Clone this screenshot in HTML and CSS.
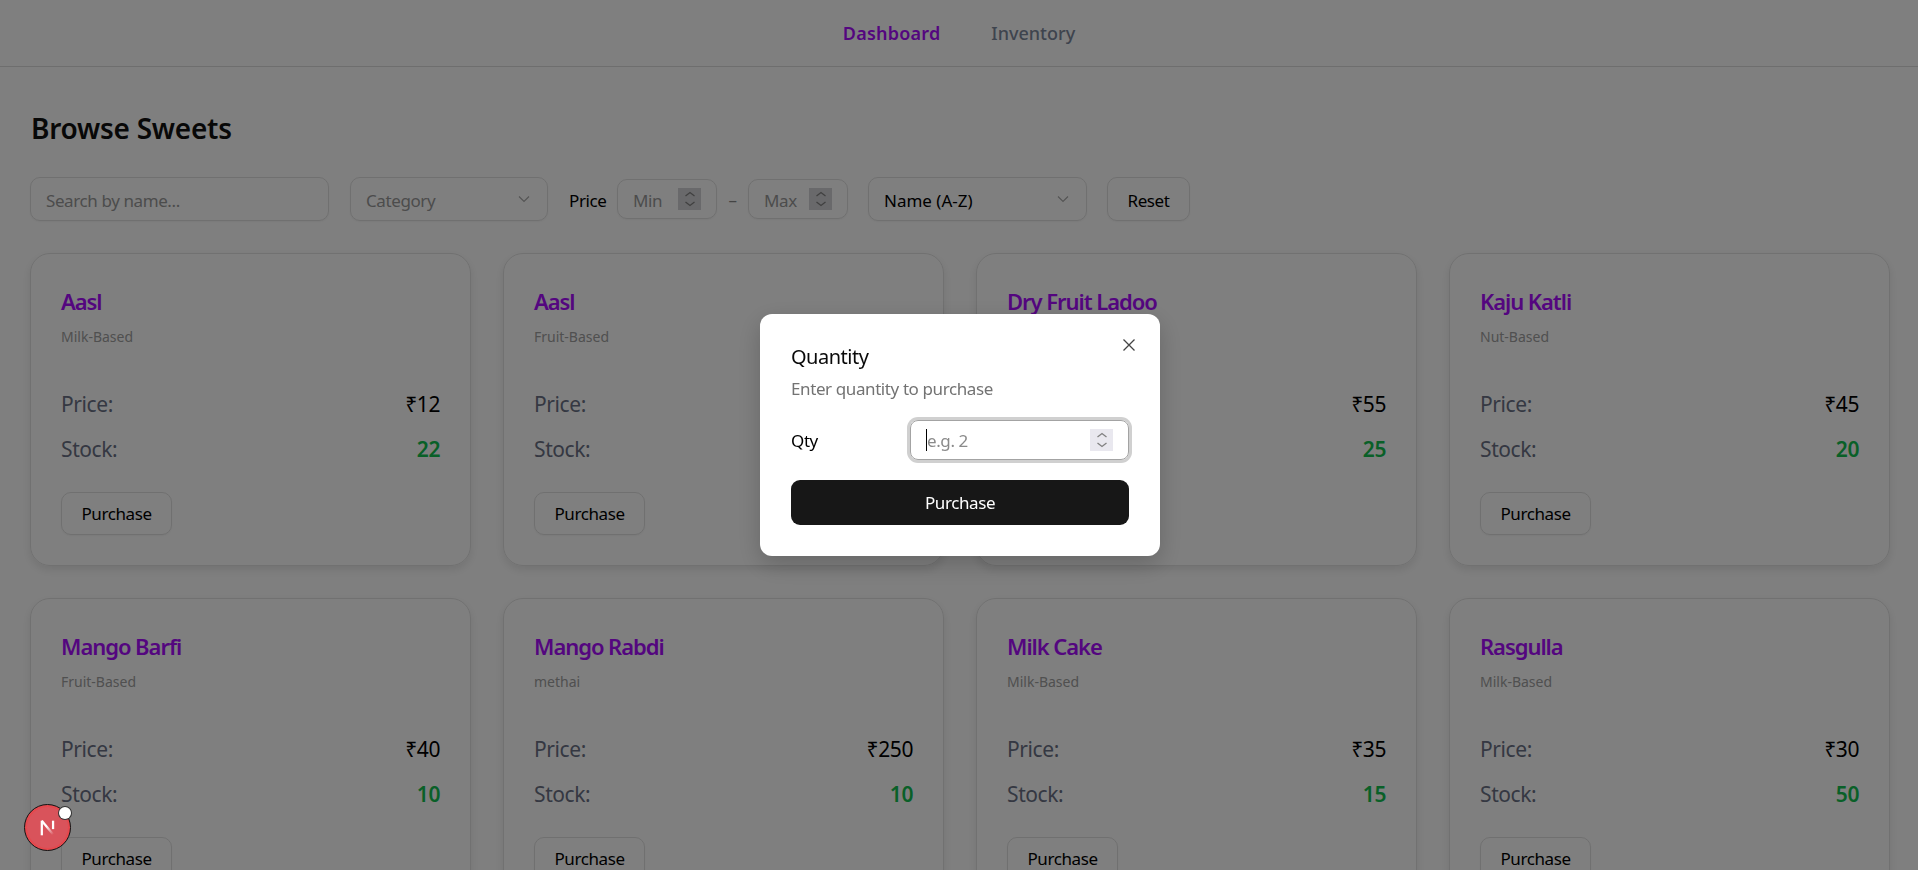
FILE: index.html
```html
<!DOCTYPE html>
<html lang="en">
<head>
    <meta charset="UTF-8">
    <meta name="viewport" content="width=device-width, initial-scale=1.0">
    <title>Browse Sweets</title>
    <link rel="stylesheet" href="styles.css">
</head>
<body>
    <nav class="topnav">
        <a class="nav-link active" href="#">Dashboard</a>
        <a class="nav-link" href="#">Inventory</a>
    </nav>

    <main class="page">
        <h1 class="page-title">Browse Sweets</h1>

        <div class="filters">
            <input class="field search" type="text" placeholder="Search by name...">
            <div class="field select muted">
                <span>Category</span>
                <svg class="chevron" viewBox="0 0 16 16"><path d="M3 5.5l5 5 5-5"/></svg>
            </div>
            <span class="price-label">Price</span>
            <div class="field small muted">
                <span>Min</span>
                <span class="spin"><svg viewBox="0 0 12 22"><path d="M1.5 8l4.500-3.500 4.500 3.500M1.500 14l4.500 3.500 4.500-3.500"/></svg></span>
            </div>
            <span class="dash">–</span>
            <div class="field small muted">
                <span>Max</span>
                <span class="spin"><svg viewBox="0 0 12 22"><path d="M1.5 8l4.500-3.500 4.500 3.500M1.500 14l4.500 3.500 4.500-3.500"/></svg></span>
            </div>
            <div class="field select sort">
                <span>Name (A-Z)</span>
                <svg class="chevron" viewBox="0 0 16 16"><path d="M3 5.5l5 5 5-5"/></svg>
            </div>
            <button class="btn reset">Reset</button>
        </div>

        <div class="grid">
            <div class="card">
                <h3 class="card-name">Aasl</h3>
                <p class="card-cat">Milk-Based</p>
                <div class="row"><span>Price:</span><span class="price">₹12</span></div>
                <div class="row"><span>Stock:</span><span class="stock">22</span></div>
                <button class="btn buy">Purchase</button>
            </div>
            <div class="card">
                <h3 class="card-name">Aasl</h3>
                <p class="card-cat">Fruit-Based</p>
                <div class="row"><span>Price:</span><span class="price">₹20</span></div>
                <div class="row"><span>Stock:</span><span class="stock">30</span></div>
                <button class="btn buy">Purchase</button>
            </div>
            <div class="card">
                <h3 class="card-name">Dry Fruit Ladoo</h3>
                <p class="card-cat">Nut-Based</p>
                <div class="row"><span>Price:</span><span class="price">₹55</span></div>
                <div class="row"><span>Stock:</span><span class="stock">25</span></div>
                <button class="btn buy">Purchase</button>
            </div>
            <div class="card">
                <h3 class="card-name">Kaju Katli</h3>
                <p class="card-cat">Nut-Based</p>
                <div class="row"><span>Price:</span><span class="price">₹45</span></div>
                <div class="row"><span>Stock:</span><span class="stock">20</span></div>
                <button class="btn buy">Purchase</button>
            </div>
            <div class="card">
                <h3 class="card-name">Mango Barfi</h3>
                <p class="card-cat">Fruit-Based</p>
                <div class="row"><span>Price:</span><span class="price">₹40</span></div>
                <div class="row"><span>Stock:</span><span class="stock">10</span></div>
                <button class="btn buy">Purchase</button>
            </div>
            <div class="card">
                <h3 class="card-name">Mango Rabdi</h3>
                <p class="card-cat">methai</p>
                <div class="row"><span>Price:</span><span class="price">₹250</span></div>
                <div class="row"><span>Stock:</span><span class="stock">10</span></div>
                <button class="btn buy">Purchase</button>
            </div>
            <div class="card">
                <h3 class="card-name">Milk Cake</h3>
                <p class="card-cat">Milk-Based</p>
                <div class="row"><span>Price:</span><span class="price">₹35</span></div>
                <div class="row"><span>Stock:</span><span class="stock">15</span></div>
                <button class="btn buy">Purchase</button>
            </div>
            <div class="card">
                <h3 class="card-name">Rasgulla</h3>
                <p class="card-cat">Milk-Based</p>
                <div class="row"><span>Price:</span><span class="price">₹30</span></div>
                <div class="row"><span>Stock:</span><span class="stock">50</span></div>
                <button class="btn buy">Purchase</button>
            </div>
        </div>
    </main>

    <!-- dim layer and purchase dialog -->
    <div class="overlay">
        <div class="modal">
            <svg class="modal-close" viewBox="0 0 16 16"><path d="M2.5 2.500l11 11M13.500 2.500l-11 11"/></svg>
            <h2 class="modal-title">Quantity</h2>
            <p class="modal-desc">Enter quantity to purchase</p>
            <div class="qty-row">
                <label class="qty-label">Qty</label>
                <div class="qty-input">
                    <span class="caret"></span>
                    <span class="qty-placeholder">e.g. 2</span>
                    <span class="spin light"><svg viewBox="0 0 12 22"><path d="M1.5 8l4.500-3.500 4.500 3.500M1.500 14l4.500 3.500 4.500-3.500"/></svg></span>
                </div>
            </div>
            <button class="modal-btn">Purchase</button>
        </div>
    </div>

    <!-- dev tools badge -->
    <div class="dev-badge">
        <svg class="dev-logo" viewBox="0 0 16 16">
            <defs>
                <linearGradient id="fade" x1="0" y1="0" x2="0.7" y2="1">
                    <stop offset="0.4" stop-color="#fff"/>
                    <stop offset="1" stop-color="#fff" stop-opacity="0"/>
                </linearGradient>
            </defs>
            <path class="n-left" d="M2.500 14.500V1.500"/>
            <path class="n-diag" d="M2.500 1.500L14 15.500"/>
            <path class="n-right" d="M12.500 1.500V9"/>
        </svg>
        <span class="dev-dot"></span>
    </div>
</body>
</html>
```

FILE: styles.css
```css
html, body {
    margin: 0;
    height: 100%;
    overflow: hidden;
}
body {
    font-family: "Noto Sans", "Open Sans", sans-serif;
    background-color: #fff;
    color: #000;
    letter-spacing: -0.4px;
}
.topnav {
    display: flex;
    justify-content: center;
    align-items: center;
    gap: 51px;
    height: 66px;
    border-bottom: 1px solid #ddd;
}
.nav-link {
    font-size: 18px;
    letter-spacing: 0;
    color: #7d889c;
    text-decoration: none;
    font-weight: 500;
}
.nav-link.active {
    color: #a80cff;
    font-weight: 600;
    letter-spacing: 0.2px;
}
.page {
    padding: 40px 28px 0 30px;
}
.page-title {
    margin: 0;
    padding-left: 1px;
    font-size: 28px;
    line-height: 42px;
    font-weight: 600;
    color: #111;
    letter-spacing: -0.25px;
}
.filters {
    display: flex;
    align-items: center;
    margin-top: 28px;
    height: 44px;
    font-size: 17px;
}
.field {
    box-sizing: border-box;
    height: 44px;
    border: 1px solid #e0e0e0;
    border-radius: 10px;
    background: transparent;
    font: inherit;
    letter-spacing: inherit;
    display: flex;
    align-items: center;
    padding: 0 15px;
    box-shadow: 0 1px 2px rgba(0, 0, 0, 0.05);
}
.field > span:first-child {
    padding-top: 3px;
}
.search {
    width: 299px;
    margin-right: 21px;
    padding-top: 3px;
    outline: none;
}
.search::placeholder {
    color: #999;
}
.select {
    justify-content: space-between;
    width: 198px;
}
.select.sort {
    width: 219px;
    margin-left: 20px;
    letter-spacing: 0;
}
.muted {
    color: #999;
}
.chevron {
    width: 16px;
    height: 16px;
    fill: none;
    stroke: #aaa;
    stroke-width: 1.2;
}
.price-label {
    width: 37px;
    margin-left: 21px;
    margin-right: 11px;
    padding-top: 3px;
}
.field.small {
    width: 100px;
    height: 40px;
    justify-content: space-between;
    padding-right: 15px;
}
.spin {
    width: 23px;
    height: 22px;
    background-color: #d2d2d6;
    display: flex;
    justify-content: center;
}
.spin svg {
    width: 12px;
    height: 22px;
    fill: none;
    stroke: #808080;
    stroke-width: 1.3;
}
.spin.light {
    background-color: #e9e8ef;
}
.dash {
    width: 31px;
    text-align: center;
    color: #888;
}
.btn {
    box-sizing: border-box;
    border: 1px solid #e0e0e0;
    border-radius: 10px;
    background: transparent;
    font: inherit;
    letter-spacing: inherit;
    color: #000;
    box-shadow: 0 1px 2px rgba(0, 0, 0, 0.05);
}
.reset {
    width: 83px;
    height: 44px;
    margin-left: 20px;
    padding-top: 3px;
}
.grid {
    display: grid;
    grid-template-columns: repeat(4, 1fr);
    gap: 32px;
    margin-top: 32px;
}
.card {
    box-sizing: border-box;
    height: 313px;
    padding: 29px 30px 30px;
    border: 1px solid #e2e2e2;
    border-radius: 20px;
    box-shadow: 0 4px 10px rgba(0, 0, 0, 0.1);
}
.card-name {
    margin: 0;
    font-size: 22px;
    line-height: 36px;
    font-weight: 600;
    color: #a80cff;
    letter-spacing: -1.05px;
}
.card-cat {
    margin: 8px 0 42px;
    font-size: 14px;
    line-height: 20px;
    color: #a0a0a0;
    letter-spacing: 0;
}
.row {
    display: flex;
    justify-content: space-between;
    font-size: 21px;
    line-height: 30px;
    margin-bottom: 15px;
    color: #6a7185;
}
.price {
    color: #000;
}
.stock {
    color: #12c050;
    font-weight: 600;
}
.buy {
    display: block;
    width: 111px;
    height: 43px;
    margin-top: 28px;
    font-size: 17px;
}
.overlay {
    position: fixed;
    inset: 0;
    padding-left: 2px;
    background-color: rgba(0, 0, 0, 0.5);
    display: flex;
    align-items: center;
    justify-content: center;
}
.modal {
    position: relative;
    box-sizing: border-box;
    width: 400px;
    height: 242px;
    padding: 30px 31px;
    background-color: #fff;
    border-radius: 12px;
    box-shadow: 0 8px 24px rgba(0, 0, 0, 0.2);
}
.modal-close {
    position: absolute;
    top: 23px;
    right: 23px;
    width: 16px;
    height: 16px;
    fill: none;
    stroke: #444;
    stroke-width: 1.3;
}
.modal-title {
    margin: 0;
    font-size: 20px;
    line-height: 26px;
    font-weight: 400;
    color: #0a0a0a;
    letter-spacing: -0.5px;
}
.modal-desc {
    margin: 7px 0 0;
    font-size: 17px;
    line-height: 24px;
    color: #737373;
}
.qty-row {
    display: flex;
    align-items: center;
    margin-top: 19px;
}
.qty-label {
    width: 119px;
    font-size: 17px;
}
.qty-input {
    box-sizing: border-box;
    flex: 1;
    height: 40px;
    display: flex;
    align-items: center;
    padding: 0 15px;
    border: 1px solid #a3a3a3;
    border-radius: 8px;
    box-shadow: 0 0 0 3px #d0d0d0;
    font-size: 17px;
}
.caret {
    width: 1px;
    height: 22px;
    background-color: #000;
}
.qty-placeholder {
    flex: 1;
    color: #8a8a8a;
}
.modal-btn {
    display: block;
    width: 100%;
    height: 45px;
    margin-top: 20px;
    border: none;
    border-radius: 9px;
    background-color: #171717;
    color: #fff;
    font: inherit;
    letter-spacing: inherit;
    font-size: 17px;
}
.dev-badge {
    position: fixed;
    left: 24px;
    top: 804px;
    box-sizing: border-box;
    width: 47px;
    height: 47px;
    border-radius: 50%;
    border: 1px solid #111;
    background-color: #d9535b;
    box-shadow: inset 0 0 0 2px #e5484d;
    display: flex;
    align-items: center;
    justify-content: center;
}
.dev-logo {
    width: 18px;
    height: 18px;
    fill: none;
    stroke-width: 2;
}
.n-left, .n-right {
    stroke: #fff;
}
.n-diag {
    stroke: url(#fade);
}
.dev-dot {
    position: absolute;
    top: 2px;
    right: -1px;
    box-sizing: border-box;
    width: 12px;
    height: 12px;
    background-color: #fff;
    border-radius: 50%;
    box-shadow: 0 0 0 1px #333;
}
```
